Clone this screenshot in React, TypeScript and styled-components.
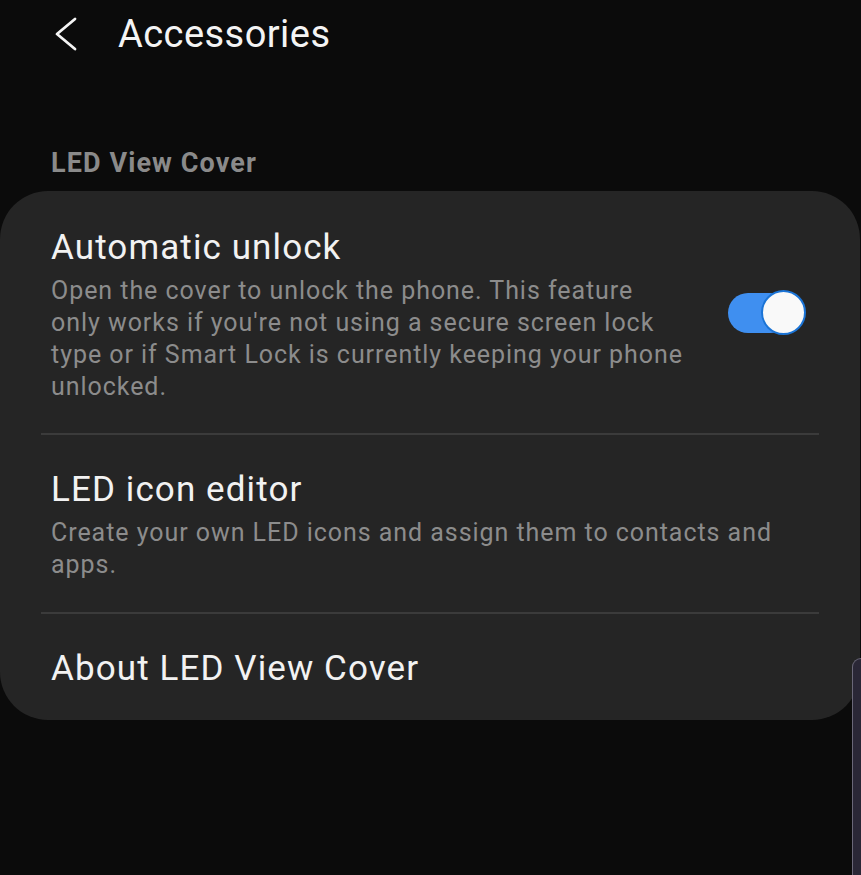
import React from "react";
import styled, { createGlobalStyle } from "styled-components";

const GlobalStyle = createGlobalStyle`
  html, body {
    margin: 0;
    padding: 0;
    background: #0b0b0b;
  }
  body {
    font-family: Roboto, "Noto Sans", "Liberation Sans", sans-serif;
    -webkit-font-smoothing: antialiased;
  }
`;

const Screen = styled.div`
  position: relative;
  width: 861px;
  height: 875px;
  overflow: hidden;
  background: #0b0b0b;
  display: flex;
  flex-direction: column;
`;

const Header = styled.header`
  display: flex;
  align-items: center;
  height: 48px;
  margin-top: 10px;
  padding-left: 54px;
  gap: 38px;
`;

const BackButton = styled.button`
  display: flex;
  align-items: center;
  justify-content: center;
  width: 26px;
  height: 40px;
  padding: 0;
  border: none;
  background: transparent;
  cursor: pointer;
`;

const Title = styled.h1`
  margin: 0;
  font-size: 38px;
  line-height: 48px;
  font-weight: 400;
  color: #f4f4f4;
  letter-spacing: 0.45px;
`;

const SectionLabel = styled.h2`
  margin: 89px 0 0 51px;
  font-size: 27px;
  line-height: 32px;
  font-weight: 700;
  color: #8a8a8a;
  letter-spacing: 1.1px;
`;

const Card = styled.section`
  margin: 12px 1px 0 0;
  padding-top: 2px;
  background: #252525;
  border-radius: 48px;
  display: flex;
  flex-direction: column;
`;

const Row = styled.div`
  display: flex;
  align-items: center;
  padding: 31px 70px 31px 51px;
  &:first-child {
    padding-bottom: 30px;
  }
  &:last-child {
    padding-bottom: 27px;
  }
`;

const RowText = styled.div`
  flex: 1;
  display: flex;
  flex-direction: column;
`;

const RowTitle = styled.div`
  font-size: 35px;
  line-height: 48px;
  color: #f2f2f2;
  letter-spacing: 1.1px;
`;

const RowDesc = styled.div`
  margin-top: 3px;
  font-size: 25px;
  line-height: 32px;
  color: #8c8c8c;
  letter-spacing: 0.95px;
  white-space: nowrap;
`;

const Divider = styled.hr`
  margin: 0 41px;
  border: none;
  height: 2px;
  background: #3b3b3b;
`;

const Switch = styled.div<{ $on: boolean }>`
  position: relative;
  flex: none;
  width: 62px;
  height: 40px;
  border-radius: 20px;
  background: ${(p) => (p.$on ? "#3f8ff0" : "#555")};
  margin-left: 20px;
  margin-top: -2px;
`;

const Thumb = styled.div<{ $on: boolean }>`
  position: absolute;
  box-sizing: border-box;
  top: -3px;
  left: ${(p) => (p.$on ? "33px" : "-6px")};
  width: 45px;
  height: 45px;
  border-radius: 50%;
  background: #f9f9f9;
  border: 2px solid #1b74d6;
`;

const ScrollHint = styled.div`
  position: absolute;
  left: 852px;
  top: 658px;
  width: 30px;
  height: 260px;
  background: #2a2736;
  border-left: 1.5px solid #6a6778;
  border-top: 1.5px solid #6a6778;
  border-top-left-radius: 9px;
`;

const Chevron = () => (
  <svg width="26" height="40" viewBox="0 0 26 40" fill="none">
    <polyline
      points="21,5 3,20 21,35"
      stroke="#f4f4f4"
      strokeWidth="2.8"
      strokeLinecap="round"
      strokeLinejoin="round"
    />
  </svg>
);

export default function App() {
  return (
    <>
      <GlobalStyle />
      <Screen>
        <Header>
          <BackButton aria-label="Back">
            <Chevron />
          </BackButton>
          <Title>Accessories</Title>
        </Header>
        <SectionLabel>LED View Cover</SectionLabel>
        <Card>
          <Row>
            <RowText>
              <RowTitle>Automatic unlock</RowTitle>
              <RowDesc>
                Open the cover to unlock the phone. This feature
                <br />
                only works if you're not using a secure screen lock
                <br />
                type or if Smart Lock is currently keeping your phone
                <br />
                unlocked.
              </RowDesc>
            </RowText>
            <Switch $on={true}>
              <Thumb $on={true} />
            </Switch>
          </Row>
          <Divider />
          <Row>
            <RowText>
              <RowTitle>LED icon editor</RowTitle>
              <RowDesc>
                Create your own LED icons and assign them to contacts and
                <br />
                apps.
              </RowDesc>
            </RowText>
          </Row>
          <Divider />
          <Row>
            <RowText>
              <RowTitle>About LED View Cover</RowTitle>
            </RowText>
          </Row>
        </Card>
        <ScrollHint />
      </Screen>
    </>
  );
}
